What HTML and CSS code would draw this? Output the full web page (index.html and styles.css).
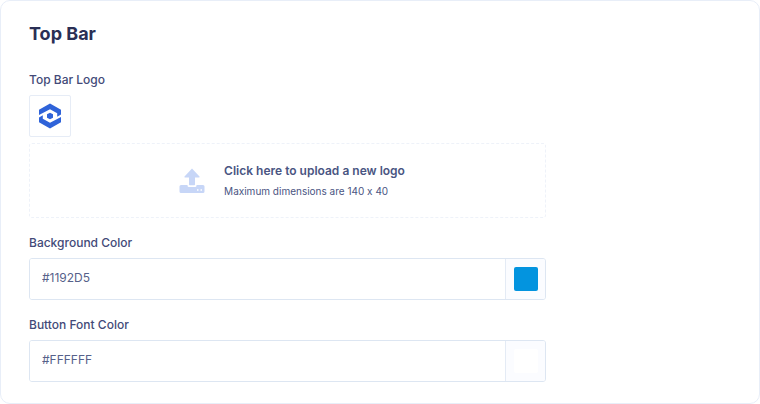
FILE: index.html
```html
<!DOCTYPE html>
<html lang="en">
<head>
    <meta charset="UTF-8">
    <meta name="viewport" content="width=device-width, initial-scale=1.0">
    <title>Top Bar</title>
    <link rel="stylesheet" href="styles.css">
</head>
<body>
    <section class="card">
        <h2>Top Bar</h2>
        <form class="form">
            <div class="form-group">
                <label class="field-label" for="logo">Top Bar Logo</label>
                <div class="logo-preview">
                    <svg width="24" height="26" viewBox="0 0 24 26" fill="#2f63d9" aria-hidden="true">
                        <path d="M1 6.800 12 .5 23 6.800V11.500L19.200 13.700V10.300L12 6.200 1 12z"/>
                        <path d="M23 19.200 12 25.500 1 19.200V14.500L4.800 12.300V15.700L12 19.800 23 14z"/>
                        <path d="m12 9.800 3 1.500v3.400l-3 1.500-3-1.500v-3.400z"/>
                    </svg>
                </div>
                <label class="upload" for="logo">
                    <svg width="26" height="26" viewBox="0 0 26 26" fill="#c7d6f7" aria-hidden="true">
                        <path d="M13 .5 20.500 8.500q.6 1-.6 1H16V16.500q0 .8-.8.8h-4.400q-.8 0-.8-.8V9.500H6.100q-1.200 0-.6-1z"/>
                        <path fill-rule="evenodd" d="M2 17h6.500v.5q0 1.500 1.500 1.500h6q1.500 0 1.500-1.500V17H24q1.500 0 1.500 1.500v5Q25.500 25 24 25H2Q.5 25 .5 23.500v-5Q.5 17 2 17zm16 4.200v1.500H19.500V21.200zm3.500 0v1.500H23V21.200z"/>
                    </svg>
                    <span class="upload-text">
                        <strong>Click here to upload a new logo</strong>
                        <small>Maximum dimensions are 140 x 40</small>
                    </span>
                </label>
                <input type="file" id="logo" class="file-input" accept="image/*">
            </div>
            <div class="form-group">
                <label class="field-label" for="background">Background Color</label>
                <div class="color-field">
                    <input type="text" id="background" value="#1192D5">
                    <button type="button" class="picker" aria-label="Pick background color">
                        <span class="swatch swatch-blue"></span>
                    </button>
                </div>
            </div>
            <div class="form-group">
                <label class="field-label" for="fontColor">Button Font Color</label>
                <div class="color-field">
                    <input type="text" id="fontColor" value="#FFFFFF">
                    <button type="button" class="picker" aria-label="Pick button font color">
                        <span class="swatch swatch-white"></span>
                    </button>
                </div>
            </div>
        </form>
    </section>
</body>
</html>
```
FILE: styles.css
```css
* {
    box-sizing: border-box;
}
body {
    font-family: Inter, "Liberation Sans", sans-serif;
    font-feature-settings: "calt" 0;
    margin: 0;
    background-color: #ffffff;
    color: #4a5582;
}
.card {
    padding: 21px 28px;
    border: 1px solid #e8eef8;
    border-radius: 10px;
}
h2 {
    margin: 0 0 26px;
    font-size: 18px;
    line-height: 24px;
    font-weight: 700;
    color: #2a2f55;
}
.form {
    max-width: 517px;
}
.form-group {
    position: relative;
    margin-bottom: 17px;
}
.form-group:last-child {
    margin-bottom: 0;
}
.field-label {
    display: block;
    margin-bottom: 7px;
    font-size: 12px;
    line-height: 16px;
    font-weight: 500;
    color: #434a78;
}
.logo-preview {
    display: flex;
    align-items: center;
    justify-content: center;
    width: 42px;
    height: 42px;
    margin-bottom: 6px;
    border: 1px solid #e6ecf6;
    border-radius: 2px;
}
.upload {
    display: flex;
    align-items: center;
    justify-content: center;
    gap: 19px;
    padding: 18px 0 18px 9px;
    border: 1px dashed #eef2f9;
    border-radius: 3px;
    cursor: pointer;
}
.upload-text {
    display: flex;
    flex-direction: column;
    gap: 3px;
}
.upload-text strong {
    font-size: 12px;
    line-height: 18px;
    font-weight: 600;
}
.upload-text small {
    font-size: 10px;
    line-height: 16px;
}
.file-input {
    position: absolute;
    width: 1px;
    height: 1px;
    opacity: 0;
}
.color-field {
    display: flex;
    height: 42px;
    border: 1px solid #dde6f2;
    border-radius: 3px;
    overflow: hidden;
}
.color-field input {
    flex: 1;
    min-width: 0;
    padding: 0 12px 3px;
    border: none;
    outline: none;
    font-family: inherit;
    font-size: 12px;
    color: #56618a;
}
.picker {
    display: flex;
    align-items: center;
    justify-content: center;
    width: 40px;
    padding: 0;
    border: none;
    border-left: 1px solid #e4ebf5;
    background-color: #fbfcff;
    cursor: pointer;
}
.swatch {
    width: 24px;
    height: 24px;
    border-radius: 2px;
}
.swatch-blue {
    background-color: #0394df;
}
.swatch-white {
    background-color: #ffffff;
}
```
